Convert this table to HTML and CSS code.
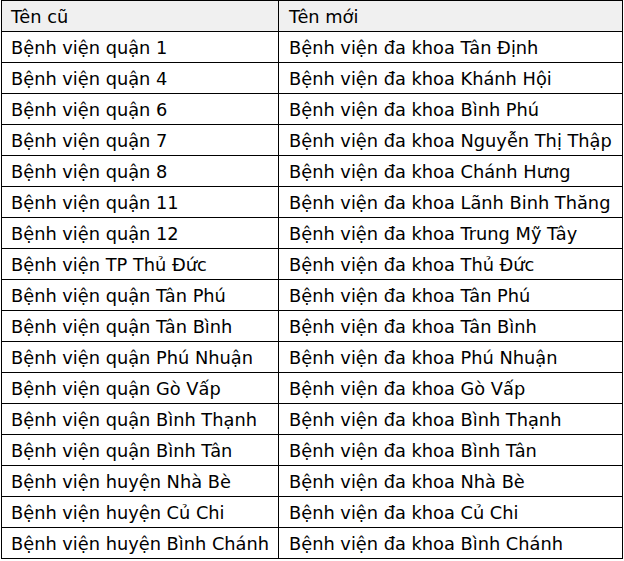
FILE: index.html
```html
<!DOCTYPE html>
<html lang="vi">
<head>
<meta charset="utf-8">
<link rel="stylesheet" href="styles.css">
</head>
<body>
<table class="names">
<thead>
<tr><th class="col-old">Tên cũ</th><th class="col-new">Tên mới</th></tr>
</thead>
<tbody>
<tr><td>Bệnh viện quận 1</td><td class="col-new">Bệnh viện đa khoa Tân Định</td></tr>
<tr><td>Bệnh viện quận 4</td><td class="col-new">Bệnh viện đa khoa Khánh Hội</td></tr>
<tr><td>Bệnh viện quận 6</td><td class="col-new">Bệnh viện đa khoa Bình Phú</td></tr>
<tr><td>Bệnh viện quận 7</td><td class="col-new">Bệnh viện đa khoa Nguyễn Thị Thập</td></tr>
<tr><td>Bệnh viện quận 8</td><td class="col-new">Bệnh viện đa khoa Chánh Hưng</td></tr>
<tr><td>Bệnh viện quận 11</td><td class="col-new">Bệnh viện đa khoa Lãnh Binh Thăng</td></tr>
<tr><td>Bệnh viện quận 12</td><td class="col-new">Bệnh viện đa khoa Trung Mỹ Tây</td></tr>
<tr><td>Bệnh viện TP Thủ Đức</td><td class="col-new">Bệnh viện đa khoa Thủ Đức</td></tr>
<tr><td>Bệnh viện quận Tân Phú</td><td class="col-new">Bệnh viện đa khoa Tân Phú</td></tr>
<tr><td>Bệnh viện quận Tân Bình</td><td class="col-new">Bệnh viện đa khoa Tân Bình</td></tr>
<tr><td>Bệnh viện quận Phú Nhuận</td><td class="col-new">Bệnh viện đa khoa Phú Nhuận</td></tr>
<tr><td>Bệnh viện quận Gò Vấp</td><td class="col-new">Bệnh viện đa khoa Gò Vấp</td></tr>
<tr><td>Bệnh viện quận Bình Thạnh</td><td class="col-new">Bệnh viện đa khoa Bình Thạnh</td></tr>
<tr><td>Bệnh viện quận Bình Tân</td><td class="col-new">Bệnh viện đa khoa Bình Tân</td></tr>
<tr><td>Bệnh viện huyện Nhà Bè</td><td class="col-new">Bệnh viện đa khoa Nhà Bè</td></tr>
<tr><td>Bệnh viện huyện Củ Chi</td><td class="col-new">Bệnh viện đa khoa Củ Chi</td></tr>
<tr><td>Bệnh viện huyện Bình Chánh</td><td class="col-new">Bệnh viện đa khoa Bình Chánh</td></tr>
</tbody>
</table>
</body>
</html>
```
FILE: styles.css
```css
html, body {
  margin: 0;
  padding: 0;
  background: #ffffff;
}
body {
  padding: 0 0 0 1px;
  font-family: "DejaVu Sans", sans-serif;
  font-size: 17.8px;
  color: #000;
}
.names {
  border-collapse: collapse;
  width: 622px;
}
.names th,
.names td {
  border: 1px solid #000;
  padding: 0 9px;
  height: 30px;
  text-align: left;
  font-weight: normal;
  white-space: nowrap;
}
.names th {
  background: #f0f0f0;
}
.names .col-old {
  width: 258px;
}
.names .col-new {
  padding-left: 10px;
}
```
